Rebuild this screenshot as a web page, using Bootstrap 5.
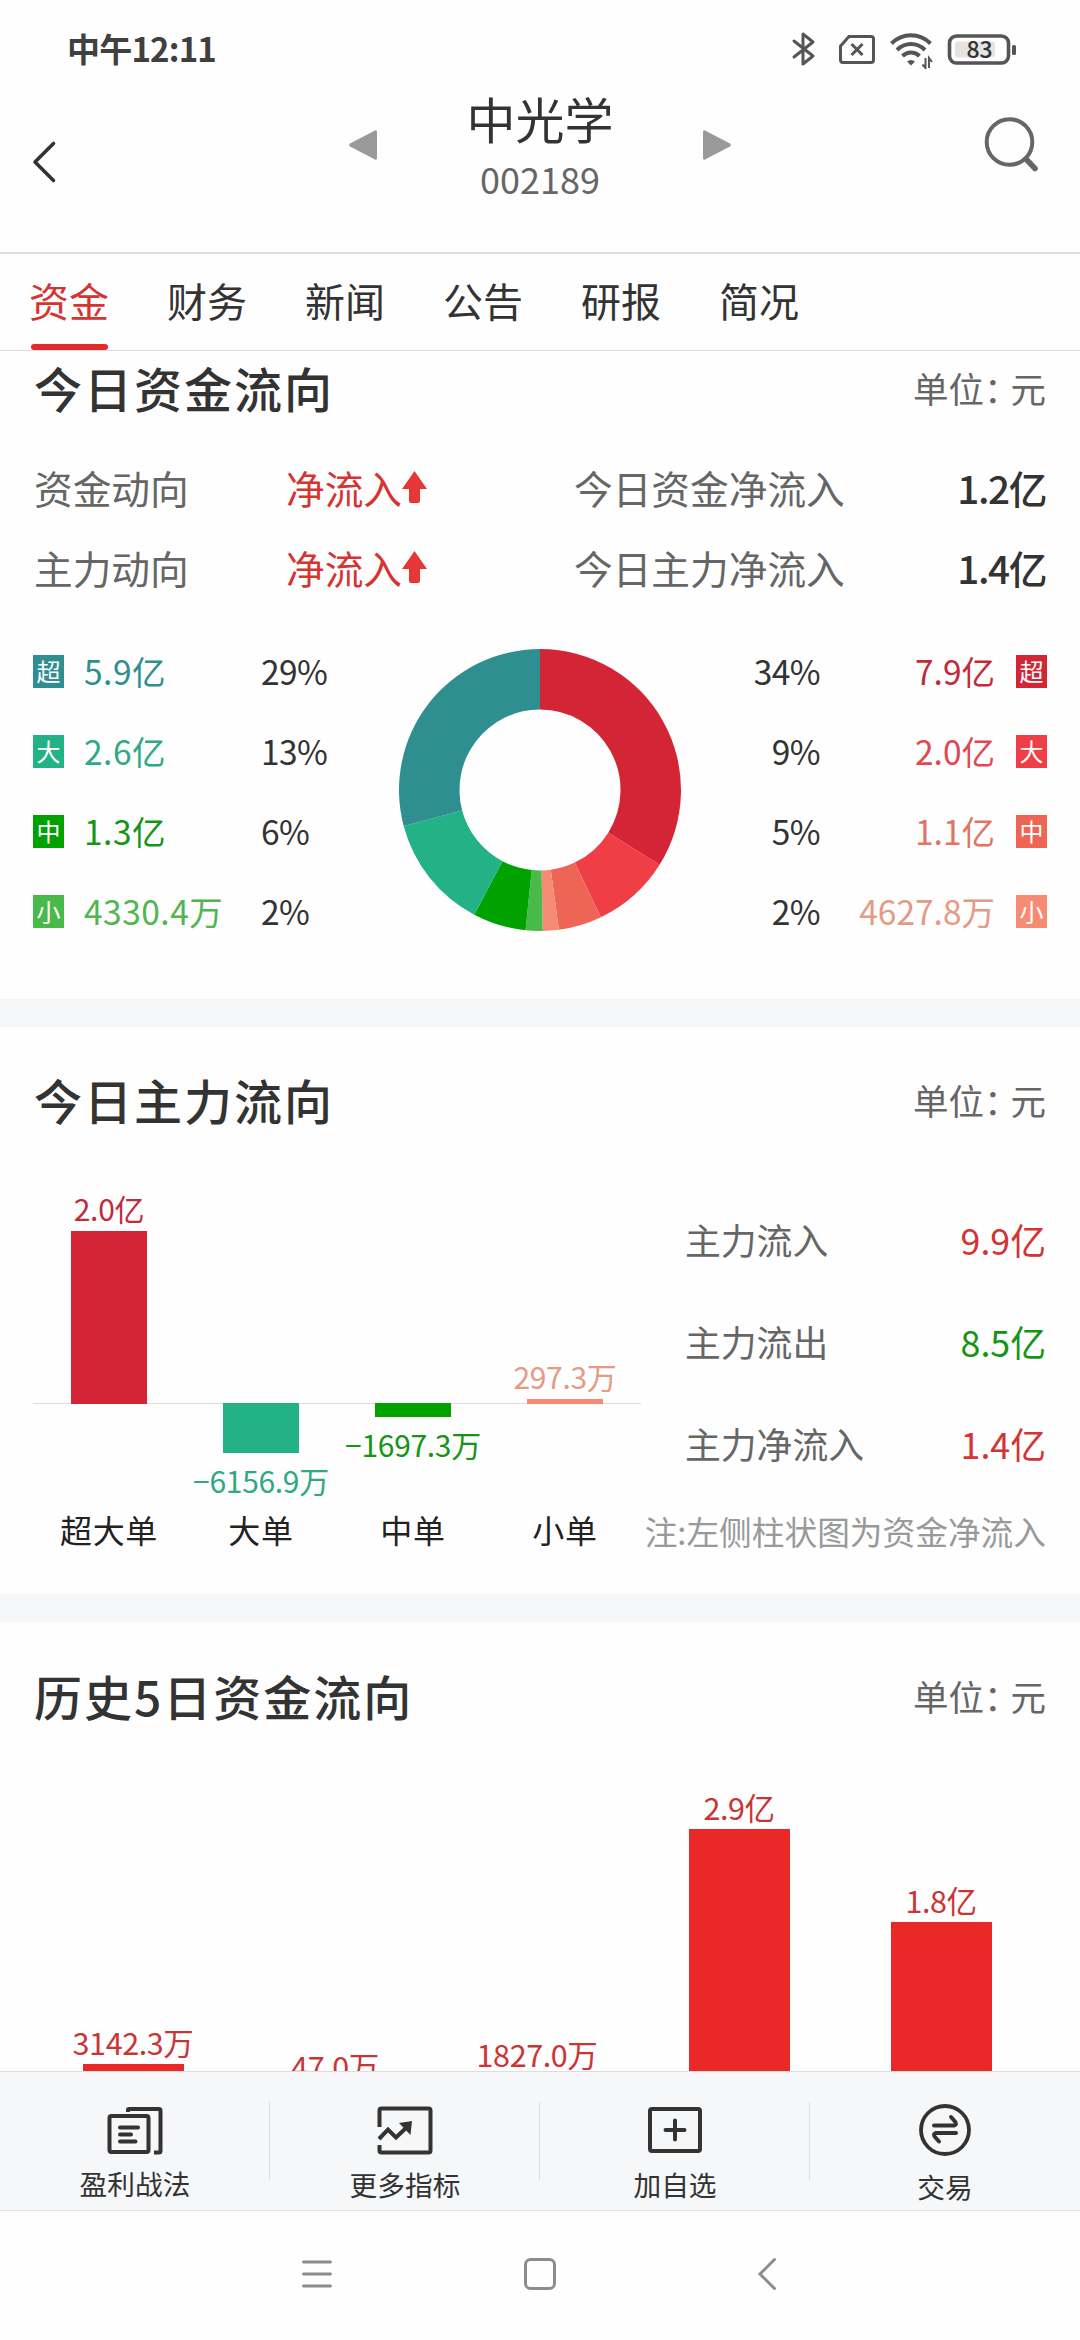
<!DOCTYPE html>
<html lang="zh-CN">
<head>
<meta charset="utf-8">
<meta name="viewport" content="width=device-width, initial-scale=1">
<title>中光学 002189</title>
<link href="https://cdn.jsdelivr.net/npm/bootstrap@5.3.0/dist/css/bootstrap.min.css" rel="stylesheet">
<style>
  body { font-family: "Noto Sans CJK SC", sans-serif; color: #333; width: 1080px; height: 2340px; overflow: hidden; line-height: 1; background: #fefefe; }
  svg { display: block; flex: none; }
  .statusbar { height: 96px; padding: 0 64px 0 67px; }
  .clock { font-size: 33px; font-weight: 700; color: #404040; letter-spacing: -.8px; }
  .sysicons { margin-top: 2px; }
  .topbar { height: 158px; border-bottom: 2px solid #ddd; padding: 0 41px 0 31px; }
  .stock-name { font-size: 49px; margin-top: -3px; }
  .stock-code { font-size: 36px; color: #666; margin-top: 18px; }
  .tabs-line { height: 97px; border-bottom: 1px solid #ddd; padding-left: 29px; gap: 58px; }
  .tab-item { width: 80px; font-size: 40px; color: #333; padding-top: 26px; height: 96px; text-decoration: none; white-space: nowrap; }
  .tab-item.current { color: #d63333; }
  .tab-item.current::after { content: ""; display: block; width: 77px; height: 6px; border-radius: 3px; background: #e22b2b; margin: 24px 0 0 2px; }
  .scroller { height: 1720px; overflow: hidden; }
  .panel { padding: 0 34px; overflow: hidden; }
  .band { height: 28px; background: #f6f7f9; }
  .head-text { font-size: 48px; font-weight: 500; letter-spacing: 2px; margin: -3px 0 0; line-height: 1; }
  .unit-text { font-size: 35.5px; color: #666; }
  .unit-text span { letter-spacing: -9px; }
  .facts { height: 80px; font-size: 38.7px; color: #666; }
  .facts .f1 { width: 252px; }
  .facts .f2 { width: 288px; color: #d63333; }
  .facts .f4 { color: #333; font-weight: 500; letter-spacing: -1.4px; }
  .legend-row { height: 80px; font-size: 33.5px; }
  .chip { width: 31px; height: 33px; color: #fff; font-size: 24px; display: flex; align-items: center; justify-content: center; padding-bottom: 1px; }
  .val-l { width: 177px; margin-left: 20px; letter-spacing: .5px; }
  .val-r { width: 175px; text-align: right; margin-right: 21px; }
  .pct { letter-spacing: -.6px; }
  .flow-chart { width: 608px; }
  .flow-col { width: 152px; font-size: 30px; white-space: nowrap; letter-spacing: -.3px; }
  .flow-col .up { height: 218px; border-bottom: 1px solid #ddd; align-self: stretch; }
  .flow-col .down { height: 109px; align-self: stretch; }
  .bar-block { width: 76px; margin-bottom: -1px; }
  .down .bar-block { margin: -1px 0 12px; }
  .up .bar-val { margin-bottom: 8px; }
  .cat-text { font-size: 32px; color: #222; letter-spacing: .7px; }
  .sum-row { height: 102px; font-size: 35.8px; color: #666; position: relative; }
  .note-text { font-size: 32.7px; color: #999; white-space: nowrap; }
  .hist-col { width: 202px; font-size: 30.5px; letter-spacing: -.4px; color: #c93535; white-space: nowrap; }
  .hist-bar { width: 101px; background: #ea2828; margin-top: 7px; }
  .toolbar { height: 140px; background: #f6f7f9; border-top: 1px solid #ddd; border-bottom: 1px solid #e2e2e2; }
  .tool { width: 25%; font-size: 27.7px; color: #333; position: relative; padding-top: 30px; }
  .tool + .tool::before { content: ""; position: absolute; left: -1px; top: 30px; height: 78px; width: 1px; background: #ddd; }
  .sysnav { height: 128px; padding: 0 0 2px 294px; }
  .c-lsup { color: #2f8f8f; } .b-lsup { background: #2f8f90; }
  .c-lbig { color: #2fa983; } .b-lbig { background: #22b286; }
  .c-lmid { color: #159515; } .b-lmid { background: #00a200; }
  .c-lsml { color: #51b551; } .b-lsml { background: #49ba49; }
  .c-rsup { color: #bf2c3b; } .b-rsup { background: #d32535; }
  .c-rbig { color: #dc4b52; } .b-rbig { background: #ef3e46; }
  .c-rmid { color: #e07465; } .b-rmid { background: #ee6556; }
  .c-rsml { color: #e59a85; } .b-rsml { background: #f68b74; }
  .c-red { color: #d33434; }
</style>
</head>
<body>
<div class="statusbar d-flex align-items-center justify-content-between">
  <div class="clock">中午12:11</div>
  <svg class="sysicons" width="226" height="40" viewBox="0 0 226 40" fill="none" stroke="#555" stroke-width="3">
    <path d="M4 12l19 15-10 8V5l10 8L4 28" stroke-linejoin="round" stroke-linecap="round" stroke-width="3"/>
    <path d="M59 7.500h22a2.500 2.500 0 0 1 2.500 2.500v21a2.500 2.500 0 0 1-2.500 2.500H53a2.500 2.500 0 0 1-2.500-2.500V17z"/>
    <path d="M61.500 15l11 11M72.500 15l-11 11"/>
    <g stroke-width="4"><path d="M101.500 14.500c11-11 28-11 39 0"/><path d="M107 21c8-8 20-8 28 0" /><path d="M112.500 27c5-4.800 12-4.800 17 0"/></g>
    <path d="M117 32.500q4-3 8 0l-4 4z" fill="#555" stroke="none"/>
    <path d="M135.500 29v10l-3-3.500M139 39V29l3 4" stroke-width="2"/>
    <rect x="159.500" y="7" width="59" height="27" rx="7" stroke-width="3.600"/>
    <rect x="165" y="12.500" width="40" height="16" rx="3" fill="#e4e4e4" stroke="none"/>
    <rect x="222" y="16" width="4" height="10" rx="1.500" fill="#555" stroke="none"/>
    <text x="189.500" y="29" text-anchor="middle" font-size="23" font-weight="500" fill="#333" stroke="none" font-family="Noto Sans CJK SC, sans-serif">83</text>
  </svg>
</div>
<header class="topbar d-flex align-items-start">
  <svg width="28" height="46" viewBox="0 0 28 46" style="margin-top:43px" fill="none" stroke="#333" stroke-width="3.600" stroke-linecap="round" stroke-linejoin="round"><path d="M22.500 4.500L4 23l18.500 18.500"/></svg>
  <svg width="28" height="30" viewBox="0 0 28 30" style="margin:34px 0 0 290px"><path d="M1 13.500L26 0.400q2-.8 2 1.600v26q0 2.400-2 1.600L1 16.500q-1.500-1.500 0-3z" fill="#999"/></svg>
  <div class="flex-fill text-center"><div class="stock-name">中光学</div><div class="stock-code">002189</div></div>
  <svg width="28" height="30" viewBox="0 0 28 30" style="margin:34px 252px 0 0"><path d="M27 13.500L2 0.400q-2-.8-2 1.600v26q0 2.400 2 1.600L27 16.500q1.500-1.500 0-3z" fill="#999"/></svg>
  <svg width="56" height="56" viewBox="0 0 56 56" style="margin-top:20px" fill="none" stroke="#666"><circle cx="26.500" cy="26" r="22.800" stroke-width="4"/><path d="M43 43l9 9.500" stroke-width="5.500" stroke-linecap="round"/></svg>
</header>
<nav class="tabs-line d-flex">
  <a class="tab-item current">资金</a><a class="tab-item">财务</a><a class="tab-item">新闻</a><a class="tab-item">公告</a><a class="tab-item">研报</a><a class="tab-item">简况</a>
</nav>
<main class="scroller">
  <section class="panel" style="height:648px">
    <div class="d-flex justify-content-between align-items-center" style="height:74px">
      <h2 class="head-text">今日资金流向</h2><div class="unit-text">单位<span>：</span>元</div>
    </div>
    <div style="padding-top:22px">
      <div class="facts d-flex align-items-center">
        <div class="f1">资金动向</div>
        <div class="f2 d-flex align-items-center">净流入<svg width="25" height="32" viewBox="0 0 25 32"><path d="M12.500 0L25 18h-7v12q0 2-2 2H9q-2 0-2-2V18H0z" fill="#e63636"/></svg></div>
        <div class="f3">今日资金净流入</div><div class="f4 ms-auto">1.2亿</div>
      </div>
      <div class="facts d-flex align-items-center">
        <div class="f1">主力动向</div>
        <div class="f2 d-flex align-items-center">净流入<svg width="25" height="32" viewBox="0 0 25 32"><path d="M12.500 0L25 18h-7v12q0 2-2 2H9q-2 0-2-2V18H0z" fill="#e63636"/></svg></div>
        <div class="f3">今日主力净流入</div><div class="f4 ms-auto">1.4亿</div>
      </div>
    </div>
    <div class="d-flex align-items-start" style="padding-top:24px;margin:0 -1px">
      <div style="width:366px">
        <div class="legend-row d-flex align-items-center"><span class="chip b-lsup">超</span><span class="val-l c-lsup">5.9亿</span><span class="pct">29%</span></div>
        <div class="legend-row d-flex align-items-center"><span class="chip b-lbig">大</span><span class="val-l c-lbig">2.6亿</span><span class="pct">13%</span></div>
        <div class="legend-row d-flex align-items-center"><span class="chip b-lmid">中</span><span class="val-l c-lmid">1.3亿</span><span class="pct">6%</span></div>
        <div class="legend-row d-flex align-items-center"><span class="chip b-lsml">小</span><span class="val-l c-lsml">4330.4万</span><span class="pct">2%</span></div>
      </div>
      <svg id="donut" width="282" height="283" viewBox="-141 -141 282 283" style="margin-top:17.500px"></svg>
      <div class="flex-fill">
        <div class="legend-row d-flex align-items-center justify-content-end"><span class="pct">34%</span><span class="val-r c-rsup">7.9亿</span><span class="chip b-rsup">超</span></div>
        <div class="legend-row d-flex align-items-center justify-content-end"><span class="pct">9%</span><span class="val-r c-rbig">2.0亿</span><span class="chip b-rbig">大</span></div>
        <div class="legend-row d-flex align-items-center justify-content-end"><span class="pct">5%</span><span class="val-r c-rmid">1.1亿</span><span class="chip b-rmid">中</span></div>
        <div class="legend-row d-flex align-items-center justify-content-end"><span class="pct">2%</span><span class="val-r c-rsml">4627.8万</span><span class="chip b-rsml">小</span></div>
      </div>
    </div>
  </section>
  <div class="band"></div>
  <section class="panel" style="height:567px">
    <div class="d-flex justify-content-between align-items-center" style="height:146px">
      <h2 class="head-text">今日主力流向</h2><div class="unit-text">单位<span>：</span>元</div>
    </div>
    <div class="d-flex" style="padding-top:13px;margin-left:-1px">
      <div class="flow-chart d-flex">
        <div class="flow-col d-flex flex-column align-items-center">
          <div class="up d-flex flex-column justify-content-end align-items-center"><span class="bar-val c-rsup">2.0亿</span><div class="bar-block b-rsup" style="height:173px"></div></div>
          <div class="down"></div><div class="cat-text">超大单</div>
        </div>
        <div class="flow-col d-flex flex-column align-items-center">
          <div class="up"></div>
          <div class="down d-flex flex-column align-items-center"><div class="bar-block b-lbig" style="height:50px"></div><span class="c-lbig">−6156.9万</span></div><div class="cat-text">大单</div>
        </div>
        <div class="flow-col d-flex flex-column align-items-center">
          <div class="up"></div>
          <div class="down d-flex flex-column align-items-center"><div class="bar-block b-lmid" style="height:14px"></div><span class="c-lmid">−1697.3万</span></div><div class="cat-text">中单</div>
        </div>
        <div class="flow-col d-flex flex-column align-items-center">
          <div class="up d-flex flex-column justify-content-end align-items-center"><span class="bar-val c-rsml">297.3万</span><div class="bar-block b-rsml" style="height:5px"></div></div>
          <div class="down"></div><div class="cat-text">小单</div>
        </div>
      </div>
      <div class="flex-fill d-flex flex-column align-items-end" style="padding-top:3px">
        <div class="sum-row d-flex align-items-center justify-content-between" style="width:361px"><span>主力流入</span><span class="c-red">9.9亿</span></div>
        <div class="sum-row d-flex align-items-center justify-content-between" style="width:361px"><span>主力流出</span><span class="c-lmid">8.5亿</span></div>
        <div class="sum-row d-flex align-items-center justify-content-between" style="width:361px"><span>主力净流入</span><span class="c-red">1.4亿</span></div>
        <div class="note-text" style="margin-top:20px">注:左侧柱状图为资金净流入</div>
      </div>
    </div>
  </section>
  <div class="band"></div>
  <section class="panel" style="height:480px">
    <div class="d-flex justify-content-between align-items-center" style="height:148px">
      <h2 class="head-text">历史5日资金流向</h2><div class="unit-text">单位<span>：</span>元</div>
    </div>
    <div class="d-flex align-items-end" style="height:322px;margin-left:-2px">
      <div class="hist-col d-flex flex-column align-items-center"><span>3142.3万</span><div class="hist-bar" style="height:28px"></div></div>
      <div class="hist-col d-flex flex-column align-items-center"><span>47.0万</span><div class="hist-bar" style="height:4px"></div></div>
      <div class="hist-col d-flex flex-column align-items-center"><span>1827.0万</span><div class="hist-bar" style="height:16px"></div></div>
      <div class="hist-col d-flex flex-column align-items-center"><span>2.9亿</span><div class="hist-bar" style="height:263px"></div></div>
      <div class="hist-col d-flex flex-column align-items-center"><span>1.8亿</span><div class="hist-bar" style="height:170px"></div></div>
    </div>
  </section>
</main>
<div class="toolbar d-flex">
  <div class="tool d-flex flex-column align-items-center">
    <svg width="56" height="56" viewBox="0 0 56 56" fill="none" stroke="#333" stroke-width="4" stroke-linecap="round"><rect x="2.500" y="14" width="39" height="36" rx="2"/><path d="M21 10V8q0-1 1-1h30q1.500 0 1.500 1.500V49q0 1.500-1.500 1.500h-5" stroke-linecap="butt"/><path d="M13 25.500h18M13 32.500h11M13 39.500h15.500"/></svg>
    <span style="margin-top:11.500px">盈利战法</span>
  </div>
  <div class="tool d-flex flex-column align-items-center">
    <svg width="56" height="56" viewBox="0 0 56 56" fill="none" stroke="#333" stroke-width="4"><path d="M2.500 25V8.500q0-2 2-2h47q2 0 2 2v40q0 2-2 2h-47q-2 0-2-2V43"/><path d="M2 37l9-9.500 8 8 10-9.500"/><path d="M22 21l13-2-1.500 14z" fill="#333" stroke="none"/></svg>
    <span style="margin-top:13px">更多指标</span>
  </div>
  <div class="tool d-flex flex-column align-items-center">
    <svg width="56" height="56" viewBox="0 0 56 56" fill="none" stroke="#333" stroke-width="4"><rect x="3" y="7" width="50" height="42" rx="2"/><path d="M28 18.500v19M18.500 28h19" stroke-linecap="round"/></svg>
    <span style="margin-top:13px">加自选</span>
  </div>
  <div class="tool d-flex flex-column align-items-center">
    <svg width="56" height="56" viewBox="0 0 56 56" fill="none" stroke="#333" stroke-width="4"><circle cx="28" cy="28" r="24" stroke-width="3.800"/><path d="M17 23.500h20q3.500-1 1-4l-4-4.500M39 31H19q-3.500 1-1 4l4 4.500" stroke-linecap="round" stroke-linejoin="round"/></svg>
    <span style="margin-top:14.500px">交易</span>
  </div>
</div>
<div class="sysnav d-flex align-items-center">
  <svg width="46" height="40" viewBox="0 0 46 40" fill="none" stroke="#8c8c8c" stroke-width="2.800" stroke-linecap="round"><path d="M9.500 8h27M9.500 20h27M9.500 32h27"/></svg>
  <svg width="40" height="40" viewBox="0 0 40 40" style="margin-left:180px" fill="none" stroke="#8c8c8c" stroke-width="3"><rect x="5.500" y="5.500" width="29" height="29" rx="5"/></svg>
  <svg width="30" height="40" viewBox="0 0 30 40" style="margin-left:193px" fill="none" stroke="#8c8c8c" stroke-width="3" stroke-linecap="round"><path d="M21.500 5.500L7 20l14.500 14.500"/></svg>
</div>
<script src="https://cdn.jsdelivr.net/npm/bootstrap@5.3.0/dist/js/bootstrap.bundle.min.js"></script>
<script>
  // Ring chart: [end angle in degrees clockwise from the top, colour]
  const slices = [[122,'#d32535'],[154.4,'#ef3e46'],[172.3,'#ee6556'],[178.9,'#f68b74'],[185.9,'#49ba49'],[207.8,'#00a200'],[255.2,'#22b286'],[360,'#2f8f90']];
  const R = 141, r = 80.5, pt = (q, a) => (q * Math.sin(a * Math.PI / 180)).toFixed(2) + ' ' + (-q * Math.cos(a * Math.PI / 180)).toFixed(2);
  let from = 0;
  document.getElementById('donut').innerHTML = slices.map(([to, c]) => {
    const d = `M${pt(R, from)}A${R} ${R} 0 0 1 ${pt(R, to)}L${pt(r, to)}A${r} ${r} 0 0 0 ${pt(r, from)}Z`;
    from = to;
    return `<path d="${d}" fill="${c}"/>`;
  }).join('');
</script>
</body>
</html>
